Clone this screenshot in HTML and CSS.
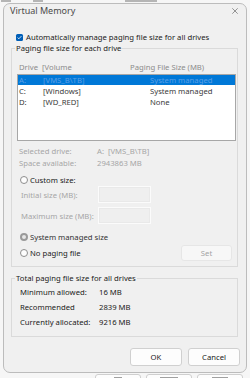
FILE: index.html
```html
<!DOCTYPE html>
<html>
<head>
<meta charset="utf-8">
<link rel="stylesheet" href="styles.css">
</head>
<body>
<div class="behind-top"><span class="frag f1"></span><span class="frag f2"></span><span class="frag f3"></span></div>
<div class="dialog">
  <div class="titlebar">
    <span class="title">Virtual Memory</span>
    <svg class="close" viewBox="0 0 6 6" width="6" height="6"><path d="M0.3 0.3L5.7 5.7M5.7 0.3L0.3 5.7" stroke="#6a6a6a" stroke-width="0.7" fill="none"/></svg>
  </div>
  <div class="auto-row">
    <span class="checkbox"><svg viewBox="0 0 7 7" width="7" height="7"><path d="M1.6 3.6L2.9 4.8L5.4 2.1" stroke="#fff" stroke-width="0.8" fill="none"/></svg></span>
    <span>Automatically manage paging file size for all drives</span>
  </div>
  <fieldset class="group g1">
    <legend>Paging file size for each drive</legend>
    <div class="hdr">
      <span class="h-drive">Drive</span><span class="h-vol">[Volume</span><span>Paging File Size (MB)</span>
    </div>
    <div class="list">
      <div class="row sel"><span class="c-drive">A:</span><span class="c-vol">[VMS_B\TB]</span><span>System managed</span></div>
      <div class="row"><span class="c-drive">C:</span><span class="c-vol">[Windows]</span><span>System managed</span></div>
      <div class="row"><span class="c-drive">D:</span><span class="c-vol">[WD_RED]</span><span>None</span></div>
    </div>
    <div class="info">
      <div class="info-row"><span class="info-label">Selected drive:</span><span>A:&nbsp; [VMS_B\TB]</span></div>
      <div class="info-row"><span class="info-label">Space available:</span><span>2943863 MB</span></div>
    </div>
    <div class="radio-row custom"><span class="radio"></span><span>Custom size:</span></div>
    <div class="field-row first"><span class="field-label">Initial size (MB):</span><span class="input"></span></div>
    <div class="field-row"><span class="field-label">Maximum size (MB):</span><span class="input"></span></div>
    <div class="radio-row sysman"><span class="radio checked"></span><span>System managed size</span></div>
    <div class="radio-row nopage"><span class="radio"></span><span>No paging file</span><span class="set-btn">Set</span></div>
  </fieldset>
  <fieldset class="group g2">
    <legend>Total paging file size for all drives</legend>
    <div class="total-row"><span class="t-label">Minimum allowed:</span><span>16 MB</span></div>
    <div class="total-row"><span class="t-label">Recommended</span><span>2839 MB</span></div>
    <div class="total-row"><span class="t-label">Currently allocated:</span><span>9216 MB</span></div>
  </fieldset>
  <div class="buttons">
    <span class="btn">OK</span>
    <span class="btn">Cancel</span>
  </div>
</div>
<div class="behind-bottom">
  <span class="bb-btn"><i class="bb-mark m1"></i></span><span class="bb-btn"><i class="bb-mark m2"></i></span><span class="bb-btn"><i class="bb-mark m3"></i></span>
</div>
</body>
</html>
```

FILE: styles.css
```css
* {
  box-sizing: border-box;
  margin: 0;
  padding: 0;
}

html, body {
  width: 250px;
  height: 378px;
  overflow: hidden;
}

body {
  background: #f6f6f6;
  font-family: "Noto Sans", sans-serif;
  font-size: 7.7px;
  color: #1b1b1b;
  display: flex;
  flex-direction: column;
}

.behind-top {
  height: 3px;
  display: flex;
  align-items: flex-start;
}

.frag {
  height: 2px;
  background: #8a8a8a;
  opacity: 0.6;
}

.f1 { width: 10px; margin-left: 1px; }
.f2 { width: 10px; margin-left: 22px; }
.f3 { width: 32px; margin-left: 82px; }

.dialog {
  margin-left: 3px;
  width: 244px;
  height: 370px;
  flex: none;
  border: 1px solid #bcbcbc;
  border-radius: 7px;
  background: #f0f0f0;
  display: flex;
  flex-direction: column;
  overflow: hidden;
}

.titlebar {
  height: 18px;
  display: flex;
  align-items: flex-start;
  padding-left: 6px;
}

.title {
  font-size: 9px;
  line-height: 14px;
  color: #4a4a4a;
}

.close {
  margin-left: auto;
  margin-right: 8px;
  margin-top: 4px;
}

.auto-row {
  margin-top: 11px;
  height: 9px;
  display: flex;
  align-items: center;
  padding-left: 12px;
  line-height: 9px;
  white-space: nowrap;
}

.checkbox {
  width: 7px;
  height: 7px;
  border-radius: 1.5px;
  background: #005fb8;
  margin-right: 3px;
  display: flex;
  flex: none;
}

.group {
  border: 1px solid #dadada;
  margin: 1px 8px 0 7px;
  padding: 9px 1px 5px 5px;
  min-width: 0;
}

.group legend {
  line-height: 10px;
  padding: 0 1px;
  margin-left: -2px;
}

.hdr {
  height: 10px;
  line-height: 10px;
  color: #8c8c8c;
  padding-left: 2px;
  display: flex;
  white-space: nowrap;
}

.h-drive { width: 23px; }
.h-vol { width: 88px; }

.list {
  margin-top: 2px;
  height: 67px;
  border: 1px solid #a7a7a7;
  background: #ffffff;
}

.row {
  height: 11px;
  line-height: 11px;
  padding-left: 1px;
  display: flex;
  color: #3a3a3a;
  white-space: nowrap;
}

.row.sel {
  height: 10px;
  line-height: 10px;
  margin-bottom: 1px;
  background: #0078d7;
  color: #5d9fe6;
}

.c-drive { width: 24px; }
.c-vol { width: 107px; }

.info {
  margin-top: 4px;
  color: #a6a6a6;
  padding-left: 2px;
}

.info-row {
  height: 12px;
  line-height: 12px;
  display: flex;
}

.info-label { width: 78px; }

.radio-row {
  display: flex;
  align-items: center;
  padding-left: 3px;
  height: 10px;
  line-height: 10px;
}

.radio-row.custom { margin-top: 6px; }
.radio-row.sysman { margin-top: 8px; color: #333; }
.radio-row.nopage { margin-top: 3px; height: 16px; padding-right: 4px; }

.radio {
  width: 8px;
  height: 8px;
  border-radius: 50%;
  border: 1px solid #8e8e8e;
  background: #fdfdfd;
  margin-right: 2px;
  flex: none;
}

.radio.checked {
  border: 2px solid #9a9a9a;
  background: #e6e6e6;
}

.field-row {
  display: flex;
  align-items: center;
  height: 17px;
  margin-top: 4px;
  padding-left: 4px;
  color: #a6a6a6;
}

.field-row.first { margin-top: 1px; }

.field-label { width: 77px; }

.input {
  width: 53px;
  height: 17px;
  border: 1px solid #fbfbfb;
  box-shadow: inset 0 0 0 1px #e9e9e9;
  background: #efefef;
}

.set-btn {
  margin-left: auto;
  width: 51px;
  height: 16px;
  line-height: 14px;
  text-align: center;
  border: 1px solid #e6e6e6;
  border-radius: 3px;
  background: #f7f7f7;
  color: #a4a4a4;
}

.g2 {
  margin-top: 6px;
  padding: 2px 1px 6px 5px;
}

.total-row {
  height: 15px;
  line-height: 15px;
  display: flex;
  padding-left: 3px;
}

.t-label { width: 79px; }

.buttons {
  margin-top: 11px;
  display: flex;
  justify-content: flex-end;
  gap: 6px;
  padding-right: 6px;
}

.btn {
  width: 52px;
  height: 18px;
  line-height: 16px;
  text-align: center;
  border: 1px solid #d0d0d0;
  border-radius: 3px;
  background: #fdfdfd;
}

.behind-bottom {
  height: 5px;
  overflow: hidden;
  display: flex;
  padding-left: 95px;
  padding-top: 1px;
  gap: 5px;
}

.bb-btn {
  width: 46px;
  height: 14px;
  border: 1px solid #cfcfcf;
  border-radius: 3px;
  background: #fdfdfd;
  display: flex;
  justify-content: center;
  padding-top: 2px;
}

.bb-mark {
  display: block;
  height: 2px;
  background: #777;
  opacity: 0.7;
}

.m1 { width: 8px; }
.m2 { width: 18px; }
.m3 { width: 16px; }
```
